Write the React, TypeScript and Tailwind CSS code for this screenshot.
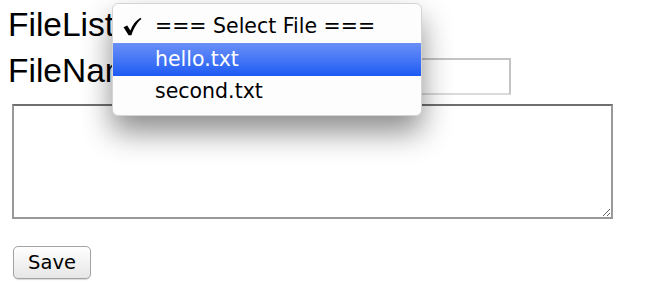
import React from "react";

const files = ["hello.txt", "second.txt"];

const Check = () => (
  <svg width="19" height="19" viewBox="0 0 18 18" className="block">
    <path d="M0.5 9.8 L4 8 L7 12.8 C9 7.5 12 3.5 16.5 0.8 L17.5 2 C13.5 5.2 10.5 10 8 17.2 L5.3 17.2 Z" fill="#000" />
  </svg>
);

// native-looking popup menu of the FileList select, drawn open
const SelectMenu = () => {
  return (
    <div className="absolute left-[112px] top-[3px] w-[310px] h-[113px] rounded-[6px] border border-[#d4d4d4] bg-[#fdfdfd] pt-[6px] shadow-[0_16px_30px_rgba(0,0,0,0.45)] font-['DejaVu_Sans',sans-serif] text-[20.5px] text-black">
      <div className="flex items-center h-[33px]">
        <span className="w-[42px] pl-[10px]">
          <Check />
        </span>
        <span>=== Select File ===</span>
      </div>
      {files.map((f, i) => (
        <div
          key={f}
          className={
            i === 0
              ? "flex items-center h-[33px] pl-[42px] text-white bg-gradient-to-b from-[#6a8ff7] to-[#1b5af3]"
              : "flex items-center h-[30px] pl-[42px]"
          }
        >
          {f}
        </div>
      ))}
    </div>
  );
};

const App = () => {
  return (
    <div className="relative w-[646px] h-[288px] bg-white px-[8px] font-['Liberation_Sans',Arial,sans-serif] text-black">
      {/* FileList row */}
      <div className="flex items-start pt-[7px]">
        <span className="text-[33.5px] leading-[36px]">FileList</span>
        <div className="ml-[14px] mt-[4px] w-[290px] h-[28px] rounded-[4px] border border-[#aaa] bg-white"></div>
      </div>

      {/* FileName row */}
      <div className="flex items-start mt-[10px]">
        <span className="text-[33.5px] leading-[36px]">FileName</span>
        <input
          type="text"
          className="ml-[4px] mt-[5px] w-[356px] h-[37px] border-2 border-[#c4c4c4] border-b-[#dadada] bg-white outline-none"
        />
      </div>

      {/* content */}
      <textarea className="block ml-[4px] mt-[9px] w-[601px] h-[115px] border-2 border-[#999] border-t-[#6f6f6f] bg-white outline-none resize" />

      <button className="block ml-[5px] mt-[27px] w-[78px] h-[33px] rounded-[5px] border border-[#a3a3a3] bg-gradient-to-b from-white to-[#e6e6e6] shadow-[0_1px_1px_rgba(0,0,0,0.15)] font-['DejaVu_Sans',sans-serif] text-[19.5px] text-black leading-none">
        Save
      </button>

      <SelectMenu />
    </div>
  );
};

export default App;
